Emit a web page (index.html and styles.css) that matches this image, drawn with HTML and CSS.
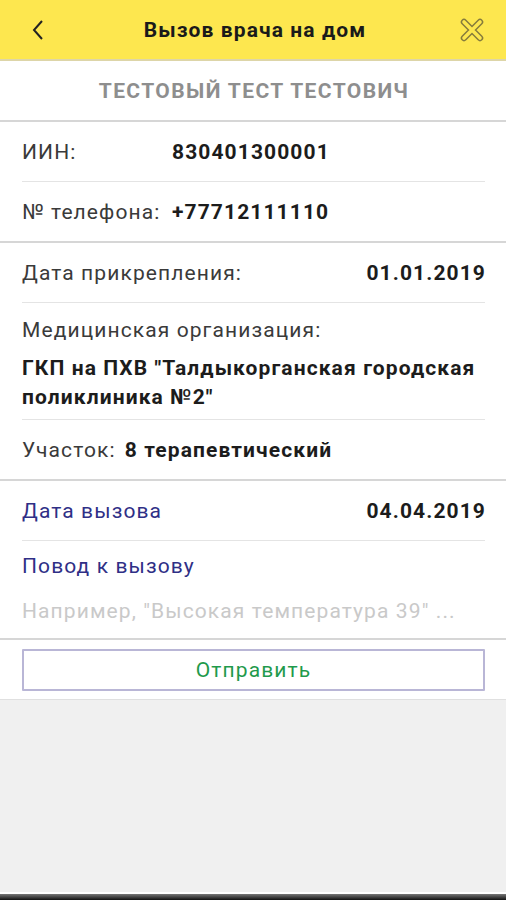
FILE: index.html
```html
<!DOCTYPE html>
<html lang="ru">
    <head>
        <meta charset="UTF-8">
        <title>Вызов врача на дом</title>
        <link rel="stylesheet" href="styles.css">
    </head>
    <body>
        <div id="screen">
            <div class="top-bar">
                <svg class="back" width="16" height="24" viewBox="0 0 16 24">
                    <path d="M12 3 L4 12 L12 21" fill="none" stroke="#222" stroke-width="2"/>
                </svg>
                <span class="title">Вызов врача на дом</span>
                <svg class="close" width="24" height="24" viewBox="0 0 24 24">
                    <path d="M4 4 L20 20 M20 4 L4 20" fill="none" stroke="#857b3c" stroke-width="6.5" stroke-linecap="round"/>
                    <path d="M4 4 L20 20 M20 4 L4 20" fill="none" stroke="#fde74f" stroke-width="3.6" stroke-linecap="round"/>
                </svg>
            </div>

            <div class="patient">ТЕСТОВЫЙ ТЕСТ ТЕСТОВИЧ</div>

            <div class="group">
                <div class="row">
                    <span class="label fixed">ИИН:</span>
                    <span class="value">830401300001</span>
                </div>
                <div class="row">
                    <span class="label fixed">№ телефона:</span>
                    <span class="value">+77712111110</span>
                </div>
            </div>

            <div class="group">
                <div class="row spread">
                    <span class="label">Дата прикрепления:</span>
                    <span class="value">01.01.2019</span>
                </div>
                <div class="row stacked">
                    <span class="label">Медицинская организация:</span>
                    <span class="value">ГКП на ПХВ "Талдыкорганская городская поликлиника №2"</span>
                </div>
                <div class="row">
                    <span class="label">Участок:</span>
                    <span class="value">8 терапевтический</span>
                </div>
            </div>

            <div class="group">
                <div class="row spread">
                    <span class="label link">Дата вызова</span>
                    <span class="value">04.04.2019</span>
                </div>
                <div class="row stacked reason">
                    <span class="label link">Повод к вызову</span>
                    <span class="hint">Например, "Высокая температура 39" ...</span>
                </div>
            </div>

            <div class="actions">
                <button class="send">Отправить</button>
            </div>

            <div class="filler"></div>
            <div class="nav-edge"></div>
        </div>
    </body>
</html>
```

FILE: styles.css
```css
body {
    margin: 0;
    padding: 0;
    font-family: Roboto, "Noto Sans", sans-serif;
}

div#screen {
    width: 506px;
    height: 900px;
    display: flex;
    flex-direction: column;
    background-color: white;
    font-size: 21px;
    letter-spacing: 1.1px;
}

.top-bar {
    height: 59px;
    flex-shrink: 0;
    background-color: #fde74f;
    border-bottom: 2px solid #ddd5a8;
    display: flex;
    align-items: center;
    padding: 0 22px 0 30px;
}

.top-bar .title {
    flex-grow: 1;
    text-align: center;
    font-weight: bold;
    color: #1a1a1a;
    padding-left: 4px;
}

.patient {
    height: 59px;
    flex-shrink: 0;
    display: flex;
    align-items: center;
    justify-content: center;
    font-weight: bold;
    color: #8e8e8e;
    letter-spacing: 1.4px;
    border-bottom: 2px solid #d6d6d6;
    padding-left: 2px;
}

.group {
    padding: 0 21px 0 22px;
    border-bottom: 2px solid #d6d6d6;
    flex-shrink: 0;
}

.row {
    height: 59px;
    display: flex;
    align-items: center;
    gap: 9px;
    border-bottom: 1px solid #e4e4e4;
}

.row:last-child {
    border-bottom: 0;
}

.row.spread {
    justify-content: space-between;
}

.row.spread .value {
    margin-right: -1px;
}

.row.stacked {
    height: auto;
    flex-direction: column;
    align-items: flex-start;
    gap: 0;
    padding: 13px 0 7px;
}

.row.stacked .label {
    line-height: 29px;
    margin-bottom: 9px;
}

.row.stacked .value {
    line-height: 29px;
}

.row.reason {
    padding: 11px 0 12px;
}

.row.reason .label {
    margin-bottom: 16px;
}

.label {
    color: #3a3a3a;
}

.label.fixed {
    width: 141px;
    flex-shrink: 0;
}

.label.link {
    color: #2f2f86;
}

.value {
    font-weight: bold;
    color: #1c1c1c;
}

.hint {
    color: #c9c9c9;
    line-height: 29px;
}

.actions {
    height: 59px;
    flex-shrink: 0;
    padding: 0 21px 0 22px;
    display: flex;
    align-items: center;
    border-bottom: 1px solid #e0e0e0;
}

.send {
    width: 100%;
    height: 42px;
    background-color: white;
    border: 2px solid #b9b6d6;
    border-radius: 1px;
    font: inherit;
    letter-spacing: inherit;
    color: #1f9a4c;
}

.filler {
    flex-grow: 1;
    background-color: #f0f0f0;
}

.nav-edge {
    height: 6px;
    flex-shrink: 0;
    border-top: 2px solid white;
    background: linear-gradient(#777, #111);
}
```
